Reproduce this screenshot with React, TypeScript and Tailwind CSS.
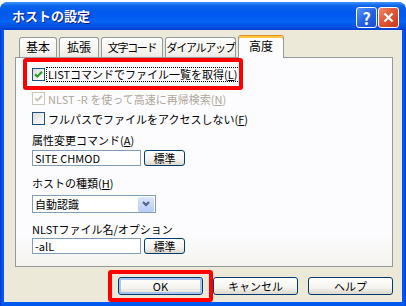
import React from "react";

const jp = "font-['Noto_Sans_CJK_JP','Noto_Sans',sans-serif]";

const Check: React.FC<{ color: string }> = ({ color }) => (
    <svg width="9" height="9" viewBox="0 0 9 9">
        <path d="M1 4.2 L3.3 6.5 L8 1.8" stroke={color} strokeWidth="2" fill="none" />
    </svg>
);

const Checkbox: React.FC<{ checked?: boolean; disabled?: boolean }> = ({ checked, disabled }) => (
    <span
        className={
            "flex h-[13px] w-[13px] shrink-0 items-center justify-center border " +
            (disabled
                ? "border-[#CAC8BB] bg-white"
                : "border-[#1C5180] bg-[linear-gradient(135deg,#DCDCD7,#FFFFFF)]")
        }
    >
        {checked ? <Check color={disabled ? "#CAC8BB" : "#21A121"} /> : null}
    </span>
);

const XpButton: React.FC<{ label: string; w: string; h: string; focused?: boolean }> = ({ label, w, h, focused }) => (
    <button
        className={
            `${w} ${h} flex items-center justify-center rounded-[3px] border border-[#003C74] leading-none text-black ` +
            (focused
                ? "bg-[linear-gradient(to_bottom,#FFFFFF,#F4F3EE_60%,#E3E0D6)] shadow-[inset_0_0_0_2px_#A8C4EE]"
                : "bg-[linear-gradient(to_bottom,#FFFFFF,#F4F3EE_60%,#DCD8CC)]")
        }
    >
        {label}
    </button>
);

const Tab: React.FC<{ label: string; w: string; active?: boolean; tight?: boolean }> = ({ label, w, active, tight }) =>
    active ? (
        <div
            className={`${w} relative z-10 -mb-px flex h-[23px] items-start justify-center rounded-t-[3px] border border-b-0 border-[#919B9C] border-t-[#E68B2C] bg-[#FCFCFE] pt-[3px] text-[12px] shadow-[inset_0_2px_0_#FFC83C]`}
        >
            {label}
        </div>
    ) : (
        <div
            className={
                `${w} flex h-[20px] items-start justify-center whitespace-nowrap rounded-t-[3px] border border-b-0 border-[#919B9C] bg-[linear-gradient(to_bottom,#FFFFFF,#F4F3EE_70%,#ECEBE6)] pt-[2px] ` +
                (tight ? "text-[11px] tracking-[-1.3px]" : "text-[12px]")
            }
        >
            {label}
        </div>
    );

export default function App() {
    return (
        <div className={`h-[306px] w-[406px] bg-white pt-[2px] text-[11px] leading-[14px] text-black ${jp}`}>
            <div className="flex h-[304px] flex-col rounded-t-[8px] bg-[linear-gradient(to_right,#0831D9,#0058EE_2px,#0058EE_calc(100%-2px),#0831D9)]">
                {/* title bar */}
                <div className="flex h-[28px] items-center rounded-t-[8px] bg-[linear-gradient(to_bottom,#3D95FF_0%,#0A62EA_14%,#0058EE_45%,#0462F4_70%,#0050E0_90%,#003DD0_100%)] pl-[12px] pr-[7px]">
                    <span className="text-[13px] font-bold text-white [text-shadow:1px_1px_0_#0A1883]">ホストの設定</span>
                    <div className="ml-auto flex gap-[1px] pt-[3px]">
                        <div className="flex h-[21px] w-[21px] items-center justify-center rounded-[3px] border border-white bg-[linear-gradient(135deg,#5A95FA,#2663E6_50%,#1A4CCF)] text-[16px] font-bold leading-none text-white">
                            ?
                        </div>
                        <div className="flex h-[21px] w-[21px] items-center justify-center rounded-[3px] border border-white bg-[linear-gradient(135deg,#F08A6C,#E05433_50%,#C8391C)]">
                            <svg width="11" height="11" viewBox="0 0 11 11">
                                <path d="M1.5 1.5 L9.5 9.5 M9.5 1.5 L1.5 9.5" stroke="white" strokeWidth="2.2" />
                            </svg>
                        </div>
                    </div>
                </div>

                {/* body */}
                <div className="mb-[4px] ml-[4px] mr-[4px] flex flex-1 flex-col bg-[#ECE9D8] pl-[11px] pr-[9px] pt-[5px]">
                    <div className="flex h-[22px] items-end gap-[2px] pl-[4px]">
                        <Tab label="基本" w="w-[38px]" />
                        <Tab label="拡張" w="w-[40px]" />
                        <Tab label="文字コード" w="w-[62px]" tight />
                        <Tab label="ダイアルアップ" w="w-[71px]" tight />
                        <Tab label="高度" w="w-[46px]" active />
                    </div>

                    <div className="flex h-[210px] flex-col border border-[#919B9C] bg-[linear-gradient(to_bottom,#FCFCFE_85%,#F4F3EE)] pl-[16px]">
                        <div className="relative mt-[10px] flex h-[13px] items-center">
                            <Checkbox checked />
                            <span className="ml-[1px] border border-dotted border-black px-[1px] leading-[13px]">
                                LISTコマンドでファイル一覧を取得(<u>L</u>)
                            </span>
                            <div className="absolute -left-[9px] -top-[10px] h-[32px] w-[220px] rounded-[3px] border-4 border-[#FF0000]" />
                        </div>
                        <div className="mt-[11px] flex h-[13px] items-center text-[#ACA899]">
                            <Checkbox checked disabled />
                            <span className="ml-[3px]">
                                NLST -R を使って高速に再帰検索(<u>N</u>)
                            </span>
                        </div>
                        <div className="mt-[7px] flex h-[13px] items-center">
                            <Checkbox />
                            <span className="ml-[3px]">
                                フルパスでファイルをアクセスしない(<u>F</u>)
                            </span>
                        </div>

                        <div className="mt-[8px]">
                            属性変更コマンド(<u>A</u>)
                        </div>
                        <div className="mt-[3px] flex items-center gap-[3px]">
                            <div className="flex h-[16px] w-[109px] items-center border border-[#7F9DB9] bg-white pl-[2px]">
                                SITE CHMOD
                            </div>
                            <XpButton label="標準" w="w-[41px]" h="h-[16px]" />
                        </div>

                        <div className="mt-[10px]">
                            ホストの種類(<u>H</u>)
                        </div>
                        <div className="mt-[5px] flex h-[18px] w-[124px] items-center border border-[#7F9DB9] bg-white pl-[2px]">
                            <span>自動認識</span>
                            <div className="ml-auto mr-px flex h-[15px] w-[16px] items-center justify-center rounded-[2px] bg-[linear-gradient(to_bottom,#DCE6FD,#B7CAF7)]">
                                <svg width="8" height="6" viewBox="0 0 8 6">
                                    <path d="M1 1 L4 4 L7 1" stroke="#4D6185" strokeWidth="2" fill="none" />
                                </svg>
                            </div>
                        </div>

                        <div className="mt-[9px]">NLSTファイル名/オプション</div>
                        <div className="mt-[2px] flex items-center gap-[3px]">
                            <div className="flex h-[16px] w-[109px] items-center border border-[#7F9DB9] bg-white pl-[2px]">
                                -alL
                            </div>
                            <XpButton label="標準" w="w-[41px]" h="h-[16px]" />
                        </div>
                    </div>

                    <div className="mt-[10px] flex gap-[10px] pl-[103px]">
                        <div className="relative">
                            <XpButton label="OK" w="w-[85px]" h="h-[18px]" focused />
                            <div className="absolute -left-[10px] -top-[7px] h-[32px] w-[105px] rounded-[3px] border-4 border-[#FF0000]" />
                        </div>
                        <XpButton label="キャンセル" w="w-[85px]" h="h-[18px]" />
                        <XpButton label="ヘルプ" w="w-[85px]" h="h-[18px]" />
                    </div>
                </div>
            </div>
        </div>
    );
}
